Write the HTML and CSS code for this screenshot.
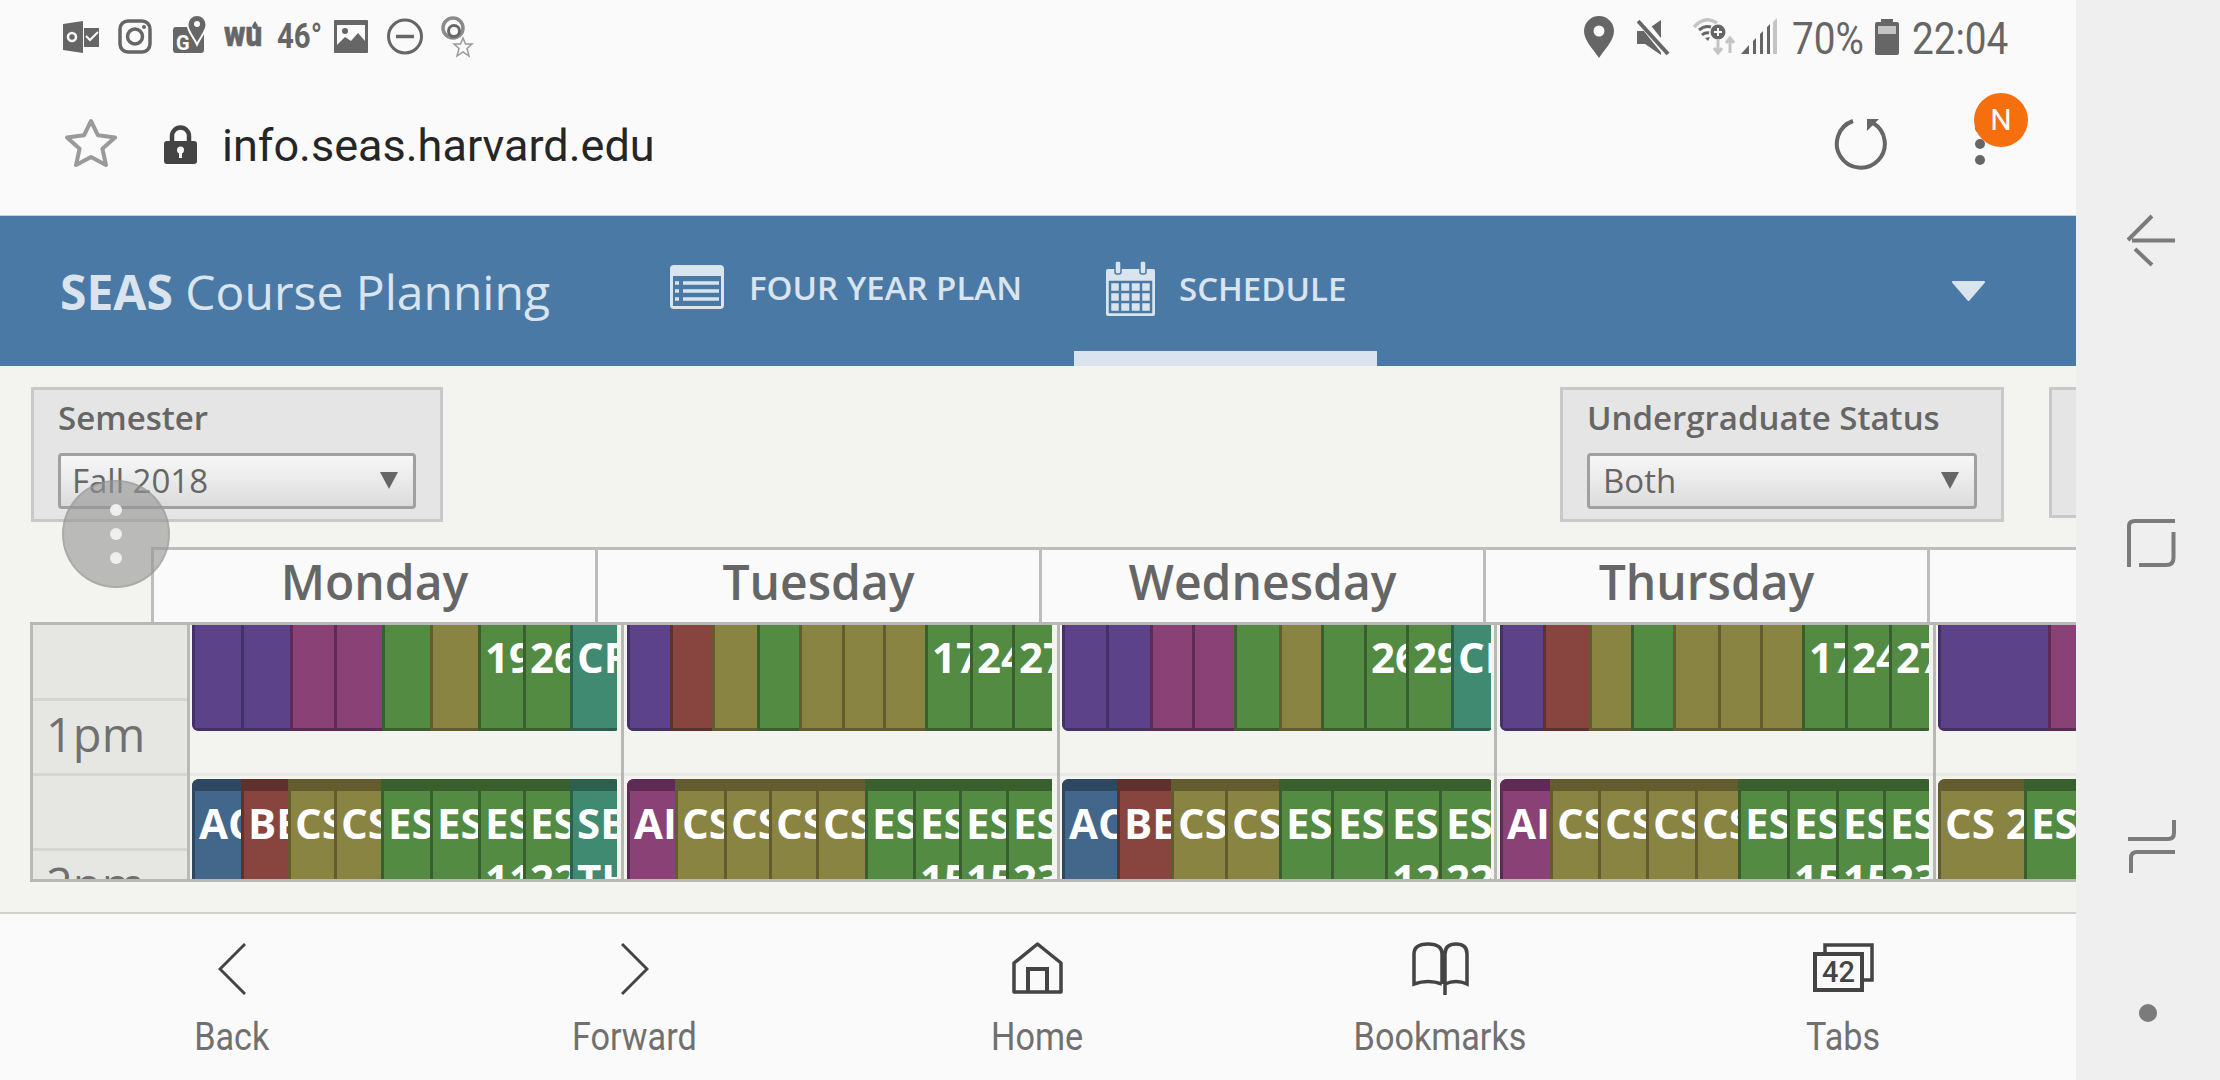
FILE: index.html
```html
<!DOCTYPE html>
<html>
<head>
  <title>SEAS Course Planning</title>
  <meta charset="UTF-8" />
  <link rel="stylesheet" href="styles.css">
</head>
<body>

  <div class="screen">
    <!-- Phone status bar -->
    <div class="statusbar">
      <svg width="55" height="76" viewBox="0 0 55 76"><path d="M0 24 L20 21 V53 L0 50Z"/><circle cx="9" cy="37" r="4" fill="none" stroke="#fafafa" stroke-width="2.5"/><rect x="21" y="28" width="15" height="19"/><path d="M23 36 l4 4 l8 -8" fill="none" stroke="#fafafa" stroke-width="2"/></svg>
      <svg width="55" height="76" viewBox="0 0 55 76"><rect x="2" y="21" width="30" height="31" rx="8" fill="none" stroke="#666" stroke-width="3.5"/><circle cx="17" cy="36.5" r="7.5" fill="none" stroke="#666" stroke-width="3.5"/><circle cx="26" cy="27" r="2"/></svg>
      <svg width="51" height="76" viewBox="0 0 51 76"><rect x="0" y="27" width="31" height="26" rx="3"/><path d="M24 15 a9.500 9.500 0 0 1 9.500 9.500 c0 7 -6 12 -9.500 20 c-3.500 -8 -9.500 -13 -9.500 -20 a9.500 9.500 0 0 1 9.500 -9.500z" stroke="#fafafa" stroke-width="2"/><circle cx="24" cy="24" r="3" fill="#fafafa"/><text x="3" y="50" class="svg-g">G</text></svg>
      <svg width="53" height="76" viewBox="0 0 53 76"><text x="0" y="46" textLength="38" lengthAdjust="spacingAndGlyphs" class="svg-wu">wu</text><path d="M31 21 l2.500 4 a2.800 2.800 0 1 1 -5 0z"/></svg>
      <span class="temp"><span class="temp-text">46°</span></span>
      <svg width="53" height="76" viewBox="0 0 53 76"><rect x="0" y="20" width="34" height="33" rx="1"/><rect x="3" y="25" width="28" height="20" fill="#fafafa"/><circle cx="11" cy="31" r="3"/><path d="M3 45 L11 37 L17 41 L24 33 L31 41 V50 H3Z"/></svg>
      <svg width="54" height="76" viewBox="0 0 54 76"><circle cx="18" cy="36.500" r="16.500" fill="none" stroke="#666" stroke-width="3"/><path d="M9 36.500 H27" stroke="#666" stroke-width="3.500"/></svg>
      <svg width="40" height="76" viewBox="0 0 40 76"><circle cx="12" cy="28" r="10" fill="none" stroke="#8a8a8a" stroke-width="3.500"/><circle cx="13" cy="31" r="5.500" fill="none" stroke="#666" stroke-width="3"/><path d="M22 38 L24.500 44 L31 44 L26 48.500 L28 56 L22 52 L16 56 L18 48.500 L13 44 L19.500 44Z" fill="#fafafa" stroke="#999" stroke-width="1.500"/></svg>

      <div class="status-right">
        <svg width="53" height="76" viewBox="0 0 53 76"><path d="M15 16 a15 15 0 0 1 15 15 c0 10 -10 19 -15 27 c-5 -8 -15 -17 -15 -27 a15 15 0 0 1 15 -15z"/><circle cx="15" cy="31" r="5.500" fill="#fafafa"/></svg>
        <svg width="56" height="76" viewBox="0 0 56 76"><path d="M0 31 H8 L24 20 V55 L8 44 H0Z"/><path d="M3 19 L31 54" stroke="#fafafa" stroke-width="9"/><path d="M1 21 L31 54" stroke="#666" stroke-width="4"/></svg>
        <svg width="48" height="76" viewBox="0 0 48 76"><path d="M1 27 Q12 15 24 23" fill="none" stroke="#c4c4c4" stroke-width="3.500"/><path d="M6 30 Q12 25 18 27 M9 35 Q12 32 16 33" fill="none" stroke="#666" stroke-width="3"/><path d="M12 38 l3 3 l2 -4z"/><circle cx="25" cy="32" r="7.500"/><path d="M25 28 V36 M21 32 H29" stroke="#fafafa" stroke-width="2"/><path d="M25 39 V52 M21 48 L25 53 L29 48" fill="none" stroke="#c4c4c4" stroke-width="3"/><path d="M37 53 V39 M33 43 L37 38 L41 43" fill="none" stroke="#c4c4c4" stroke-width="3"/></svg>
        <svg width="51" height="76" viewBox="0 0 51 76"><path d="M0 54 L8 45 V54Z"/><path d="M12 41 L15 38 V54 H12Z M19 34 L22 31 V54 H19Z M26 27 L29 24 V54 H26Z"/><path d="M32 22 L36 18 V54 H32Z" fill="#c4c4c4"/></svg>
        <span class="clock clock-pct"><span class="clock-text">70%</span></span>
        <svg width="37" height="76" viewBox="0 0 37 76"><path d="M6 19 H18 V22 H22 a2 2 0 0 1 2 2 V53 a2 2 0 0 1 -2 2 H2 a2 2 0 0 1 -2 -2 V24 a2 2 0 0 1 2 -2 H6Z"/><rect x="3" y="26" width="18" height="8" fill="#c4c4c4"/></svg>
        <span class="clock clock-time"><span class="clock-text">22:04</span></span>
      </div>
    </div>

    <!-- Browser address bar -->
    <div class="urlbar">
      <svg width="99" height="140" viewBox="0 0 99 140"><path d="M26 45 L33 59.300 L50 61.500 L37.400 72.700 L41 89 L26 81 L11 89 L14.600 72.700 L2 61.500 L19 59.300Z" fill="none" stroke="#9a9a9a" stroke-width="4" stroke-linejoin="round"/></svg>
      <svg width="58" height="140" viewBox="0 0 58 140"><path d="M8 66 V60 a8.500 8.500 0 0 1 17 0 V66" fill="none" stroke="#444" stroke-width="4.500"/><rect x="0" y="65" width="33" height="23" rx="3" fill="#444"/><circle cx="16.500" cy="74" r="3.500" fill="#fafafa"/><rect x="15" y="75" width="3" height="7" fill="#fafafa"/></svg>
      <span class="url">info.seas.harvard.edu</span>
      <svg class="reload" width="141" height="140" viewBox="0 0 141 140"><path d="M19 45 A24 24 0 1 0 39 47" fill="none" stroke="#666" stroke-width="4"/><path d="M33 43 H45 L33 55Z" fill="#666"/></svg>
      <div class="menu">
        <svg width="10" height="140" viewBox="0 0 10 140"><circle cx="5" cy="52" r="5"/><circle cx="5" cy="68" r="5"/><circle cx="5" cy="84" r="5"/></svg>
        <span class="badge">N</span>
      </div>
    </div>

    <!-- Site header -->
    <div class="site-header">
      <div class="site-title"><b>SEAS</b> Course Planning</div>
      <a class="tab">
        <svg width="54" height="44" viewBox="0 0 54 44"><rect width="54" height="44" rx="4" fill="#d9e4ee"/><rect x="3" y="11" width="48" height="30" fill="#4b79a5"/><path d="M13 18 H49 M13 26 H49 M13 34 H49 M5 18 H9 M5 26 H9 M5 34 H9" stroke="#d9e4ee" stroke-width="3.500"/></svg>
        <span>FOUR YEAR PLAN</span>
      </a>
      <a class="tab tab-active">
        <svg width="51" height="55" viewBox="0 0 51 55"><path d="M3 8 H48 a2 2 0 0 1 2 2 V53 a2 2 0 0 1 -2 2 H3 a2 2 0 0 1 -2 -2 V10 a2 2 0 0 1 2 -2Z" fill="#d9e4ee"/><rect x="10" y="0" width="6" height="13" rx="2" fill="#d9e4ee" stroke="#4b79a5" stroke-width="1.500"/><rect x="35" y="0" width="6" height="13" rx="2" fill="#d9e4ee" stroke="#4b79a5" stroke-width="1.500"/><path d="M5 21 H46 V51 H5Z M5 31 H46 M5 41 H46 M15 21 V51 M25.500 21 V51 M36 21 V51" fill="none" stroke="#4b79a5" stroke-width="2.500"/></svg>
        <span>SCHEDULE</span>
      </a>
      <svg class="site-caret" width="35" height="20" viewBox="0 0 35 20"><path d="M2 1 H33 L17.500 19Z" fill="#d9e4ee" stroke="#d9e4ee" stroke-width="2" stroke-linejoin="round"/></svg>
    </div>

    <!-- Page content -->
    <div class="planner">
      <div class="filters">
        <div class="filter filter-semester">
          <label>Semester</label>
          <div class="select"><span>Fall 2018</span><i class="select-arrow"></i></div>
        </div>
        <div class="filter filter-status">
          <label>Undergraduate Status</label>
          <div class="select"><span>Both</span><i class="select-arrow"></i></div>
        </div>
        <div class="filter filter-more"></div>
      </div>

      <div class="day-heads">
        <div class="day-head">Monday</div>
        <div class="day-head">Tuesday</div>
        <div class="day-head">Wednesday</div>
        <div class="day-head">Thursday</div>
        <div class="day-head"></div>
      </div>

      <div class="calendar">
        <div class="times">
          <div class="time"></div>
          <div class="time">1pm</div>
          <div class="time"></div>
          <div class="time">2pm</div>
        </div>

        <!-- Monday -->
        <div class="day day-1">
          <div class="row row-a">
            <div class="ev purple" style="width:49px"></div>
            <div class="ev purple" style="width:49px"></div>
            <div class="ev magenta" style="width:44px"></div>
            <div class="ev magenta" style="width:48px"></div>
            <div class="ev green" style="width:48px"></div>
            <div class="ev olive" style="width:48px"></div>
            <div class="ev green" style="width:45px">196</div>
            <div class="ev green" style="width:47px">26</div>
            <div class="ev teal" style="width:47px">CFD</div>
          </div>
          <div class="row row-b">
            <div class="ev blue" style="width:49px">AC 2</div>
            <div class="ev red" style="width:47px">BE 1</div>
            <div class="ev olive" style="width:46px">CS 1</div>
            <div class="ev olive" style="width:47px">CS 2</div>
            <div class="ev green" style="width:49px">ES 1</div>
            <div class="ev green" style="width:48px">ES 2</div>
            <div class="ev green" style="width:45px">ES 3<br>11</div>
            <div class="ev green" style="width:47px">ES 4<br>22</div>
            <div class="ev teal" style="width:47px">SEC<br>TH</div>
          </div>
        </div>

        <!-- Tuesday -->
        <div class="day day-2">
          <div class="row row-a">
            <div class="ev purple" style="width:43px"></div>
            <div class="ev red" style="width:42px"></div>
            <div class="ev olive" style="width:45px"></div>
            <div class="ev green" style="width:42px"></div>
            <div class="ev olive" style="width:43px"></div>
            <div class="ev olive" style="width:41px"></div>
            <div class="ev olive" style="width:42px"></div>
            <div class="ev green" style="width:45px">17</div>
            <div class="ev green" style="width:42px">24</div>
            <div class="ev green" style="width:40px">27</div>
          </div>
          <div class="row row-b">
            <div class="ev magenta" style="width:48px">AI 5</div>
            <div class="ev olive" style="width:49px">CS 1</div>
            <div class="ev olive" style="width:45px">CS 2</div>
            <div class="ev olive" style="width:47px">CS 3</div>
            <div class="ev olive" style="width:49px">CS 4</div>
            <div class="ev green" style="width:48px">ES 1</div>
            <div class="ev green" style="width:46px">ES 2<br>15</div>
            <div class="ev green" style="width:47px">ES 3<br>15</div>
            <div class="ev green" style="width:46px">ES 4<br>23</div>
          </div>
        </div>

        <!-- Wednesday -->
        <div class="day day-3">
          <div class="row row-a">
            <div class="ev purple" style="width:44px"></div>
            <div class="ev purple" style="width:44px"></div>
            <div class="ev magenta" style="width:42px"></div>
            <div class="ev magenta" style="width:42px"></div>
            <div class="ev green" style="width:45px"></div>
            <div class="ev olive" style="width:42px"></div>
            <div class="ev green" style="width:43px"></div>
            <div class="ev green" style="width:42px">26</div>
            <div class="ev green" style="width:45px">29</div>
            <div class="ev teal" style="width:40px">CFD</div>
          </div>
          <div class="row row-b">
            <div class="ev blue" style="width:55px">AC 2</div>
            <div class="ev red" style="width:54px">BE 1</div>
            <div class="ev olive" style="width:54px">CS 1</div>
            <div class="ev olive" style="width:54px">CS 2</div>
            <div class="ev green" style="width:52px">ES 1</div>
            <div class="ev green" style="width:54px">ES 2</div>
            <div class="ev green" style="width:54px">ES 3<br>12</div>
            <div class="ev green" style="width:52px">ES 4<br>22</div>
          </div>
        </div>

        <!-- Thursday -->
        <div class="day day-4">
          <div class="row row-a">
            <div class="ev purple" style="width:43px"></div>
            <div class="ev red" style="width:46px"></div>
            <div class="ev olive" style="width:42px"></div>
            <div class="ev green" style="width:42px"></div>
            <div class="ev olive" style="width:45px"></div>
            <div class="ev olive" style="width:42px"></div>
            <div class="ev olive" style="width:42px"></div>
            <div class="ev green" style="width:43px">17</div>
            <div class="ev green" style="width:44px">24</div>
            <div class="ev green" style="width:40px">27</div>
          </div>
          <div class="row row-b">
            <div class="ev magenta" style="width:50px">AI 5</div>
            <div class="ev olive" style="width:48px">CS 1</div>
            <div class="ev olive" style="width:48px">CS 2</div>
            <div class="ev olive" style="width:49px">CS 3</div>
            <div class="ev olive" style="width:43px">CS 4</div>
            <div class="ev green" style="width:49px">ES 1</div>
            <div class="ev green" style="width:49px">ES 2<br>15</div>
            <div class="ev green" style="width:47px">ES 3<br>15</div>
            <div class="ev green" style="width:46px">ES 4<br>23</div>
          </div>
        </div>

        <!-- Friday -->
        <div class="day day-5">
          <div class="row row-a">
            <div class="ev purple" style="width:110px"></div>
            <div class="ev magenta" style="width:100px"></div>
          </div>
          <div class="row row-b">
            <div class="ev olive" style="width:86px">CS 2</div>
            <div class="ev green" style="width:100px">ES 1</div>
          </div>
        </div>
      </div>

      <!-- Floating menu button -->
      <div class="fab"><i></i><i></i><i></i></div>
    </div>

    <!-- Browser bottom bar -->
    <div class="bottombar">
      <div class="bar-item">
        <svg width="28" height="54" viewBox="0 0 28 54"><path d="M27 2 L2 27 L27 52" fill="none" stroke="#444" stroke-width="3"/></svg>
        <span class="bar-label"><span>Back</span></span>
      </div>
      <div class="bar-item">
        <svg width="28" height="54" viewBox="0 0 28 54"><path d="M1 2 L26 27 L1 52" fill="none" stroke="#444" stroke-width="3"/></svg>
        <span class="bar-label"><span>Forward</span></span>
      </div>
      <div class="bar-item">
        <svg width="51" height="54" viewBox="0 0 51 54"><path d="M2 50 V21 L25.500 2 L49 21 V50Z" fill="none" stroke="#444" stroke-width="3.500" stroke-linejoin="round"/><path d="M16 50 V27 H35 V50" fill="none" stroke="#444" stroke-width="4"/></svg>
        <span class="bar-label"><span>Home</span></span>
      </div>
      <div class="bar-item">
        <svg width="57" height="54" viewBox="0 0 57 54"><path d="M33 53 V12 Q33 2 44 2 Q55 2 55 12 V42 Q44 37 33 42 M30 42 Q16 37 2 42 V12 Q2 2 16 2 Q30 2 30 12 V42" fill="none" stroke="#444" stroke-width="3.500"/></svg>
        <span class="bar-label"><span>Bookmarks</span></span>
      </div>
      <div class="bar-item">
        <svg width="61" height="54" viewBox="0 0 61 54"><path d="M12 10 V3 H59 V38 H51" fill="none" stroke="#444" stroke-width="3.500"/><rect x="2" y="12" width="47" height="36" fill="#fafafa" stroke="#444" stroke-width="4"/><text x="9" y="40" class="svg-tabs">42</text></svg>
        <span class="bar-label"><span>Tabs</span></span>
      </div>
    </div>
  </div>

  <!-- Android soft keys -->
  <div class="softkeys">
    <svg width="144" height="1080" viewBox="0 0 144 1080">
      <path d="M76 216 L52 240 M56 240.500 H99 M59 249 L76 265" fill="none" stroke="#7b7b7b" stroke-width="4"/>
      <path d="M53 567 V526 Q53 521 59 521 H99 M97.500 532 V558 Q97.500 565 90 565 H63" fill="none" stroke="#7b7b7b" stroke-width="4"/>
      <path d="M52 839 H92 Q98 839 98 833 V820 M99 852 H61 Q55 852 55 858 V873" fill="none" stroke="#7b7b7b" stroke-width="4"/>
      <circle cx="72" cy="1013" r="9" fill="#7b7b7b"/>
    </svg>
  </div>

</body>
</html>
```

FILE: styles.css
```css
/* Page frame */
* {
  box-sizing: border-box;
}

html, body {
  margin: 0;
  height: 1080px;
  overflow: hidden;
}

body {
  display: flex;
  width: 2220px;
  font-family: "Open Sans", sans-serif;
  background: #fafafa;
}

.screen {
  width: 2076px;
  flex-shrink: 0;
}

.softkeys {
  width: 144px;
  background: #efefef;
}

svg {
  display: block;
  flex-shrink: 0;
  fill: #666;
}

/* Status bar */
.statusbar {
  display: flex;
  height: 76px;
  padding-left: 63px;
}

.status-right {
  display: flex;
  margin-left: auto;
  padding-right: 67px;
}

.temp {
  width: 57px;
}

.temp-text {
  display: inline-block;
  font: 700 35px/74px Roboto, sans-serif;
  color: #666;
  transform: scaleX(0.84);
  transform-origin: left;
}

.clock {
  font: 400 45px/78px Roboto, sans-serif;
  color: #666;
}

.clock-pct {
  width: 83px;
}

.clock-time {
  width: 97px;
}

.clock-text {
  display: inline-block;
  white-space: nowrap;
  transform: scaleX(0.86);
  transform-origin: left;
}

.svg-g {
  font: 700 20px Roboto, sans-serif;
  fill: #fafafa;
}

.svg-wu {
  font: 900 35px Roboto, sans-serif;
  fill: #666;
  stroke: #666;
  stroke-width: 0.6px;
}

/* Address bar */
.urlbar {
  display: flex;
  align-items: center;
  height: 140px;
  padding-left: 65px;
  padding-right: 91px;
  border-bottom: 1px solid #d0d0d0;
}

.url {
  font: 400 45px Roboto, sans-serif;
  color: #262626;
}

.reload {
  margin-left: auto;
}

.menu {
  position: relative;
}

.badge {
  position: absolute;
  left: -1px;
  top: 17px;
  width: 54px;
  height: 54px;
  border-radius: 50%;
  background: #f66f0e;
  color: #fff;
  font: 400 30px/54px Roboto, sans-serif;
  text-align: center;
}

/* Site header */
.site-header {
  display: flex;
  align-items: center;
  height: 150px;
  background: #4b79a5;
  color: #d9e4ee;
}

.site-title {
  width: 639px;
  padding-left: 60px;
  font-size: 48px;
  white-space: nowrap;
}

.site-title b {
  font-weight: 700;
}

.tab {
  display: flex;
  align-items: center;
  gap: 25px;
  height: 150px;
  padding: 0 31px 8px;
  margin-right: 21px;
  font-size: 33px;
  font-weight: 600;
}

.tab-active {
  gap: 23px;
  border-bottom: 15px solid #d9e4ee;
  padding-bottom: 0;
  margin-right: 0;
  padding-top: 10px;
}

.site-caret {
  margin-left: auto;
  margin-right: 90px;
}

/* Filters */
.planner {
  position: relative;
  height: 546px;
  background: #f3f3ef;
  overflow: hidden;
  padding-top: 21px;
}

.filters {
  display: flex;
  align-items: flex-start;
  padding-left: 31px;
}

.filter {
  flex-shrink: 0;
  height: 135px;
  padding: 7px 24px 0;
  background: #e5e5e5;
  border: 3px solid #c9c9c9;
  color: #666;
}

.filter label {
  display: block;
  font-size: 33px;
  font-weight: 600;
  line-height: 42px;
}

.filter-semester {
  width: 412px;
}

.filter-status {
  width: 444px;
  margin-left: 1117px;
}

.filter-more {
  width: 200px;
  height: 131px;
  margin-left: 45px;
}

.select {
  display: flex;
  align-items: center;
  justify-content: space-between;
  height: 56px;
  margin-top: 14px;
  padding: 0 15px 2px 13px;
  border: 3px solid #a0a0a0;
  border-radius: 4px;
  background: linear-gradient(#f7f7f7, #dcdcdc);
  font-size: 33px;
}

.filter-semester .select {
  padding-left: 11px;
}

.select-arrow {
  width: 0;
  height: 0;
  border-left: 9px solid transparent;
  border-right: 9px solid transparent;
  border-top: 17px solid #666;
}

/* Day names */
.day-heads {
  display: flex;
  margin-top: 25px;
  margin-left: 151px;
}

.day-head {
  width: 444px;
  flex-shrink: 0;
  height: 75px;
  background: #fafafa;
  border-top: 3px solid #bdbdbd;
  border-left: 3px solid #bdbdbd;
  color: #666;
  font-size: 48px;
  font-weight: 600;
  line-height: 64px;
  text-align: center;
}

/* Calendar grid */
.calendar {
  display: flex;
  width: 2200px;
  height: 260px;
  margin-left: 30px;
  border: solid #b8b9b5;
  border-width: 3px 0 3px 3px;
}

.times {
  width: 157px;
  flex-shrink: 0;
  background: #e6e7e3;
  border-right: 3px solid #b8b9b5;
  overflow: hidden;
}

.time {
  height: 75px;
  padding-left: 13px;
  border-bottom: 3px solid #d5d6d2;
  color: #707070;
  font-size: 47px;
  line-height: 66px;
}

.time:first-child {
  height: 76px;
}

.day {
  flex-shrink: 0;
  height: 254px;
  padding-left: 2px;
  border-right: 3px solid #b8b9b5;
  overflow: hidden;
  background: linear-gradient(#f3f3ef 148px, #e8e9e5 148px, #e8e9e5 151px, #f3f3ef 151px);
}

.day-1 { width: 434px; }
.day-2 { width: 436px; padding-left: 3px; }
.day-3 { width: 437px; }
.day-4 { width: 439px; padding-left: 3px; }
.day-5 { width: 400px; border-right: 0; }

.row {
  display: flex;
  overflow: hidden;
  color: #fff;
  font-size: 42px;
  font-weight: 700;
  line-height: 56px;
}

.row-a {
  height: 106px;
  border-radius: 0 0 7px 7px;
}

.row-b {
  height: 140px;
  margin-top: 48px;
  border-radius: 7px 7px 0 0;
}

.ev {
  flex-shrink: 0;
  padding-left: 4px;
  border-style: solid;
  border-width: 0 0 0 3px;
  overflow: hidden;
  white-space: nowrap;
}

.row-a .ev {
  padding-top: 4px;
  border-bottom-width: 3px;
}

.row-b .ev {
  padding-top: 4px;
  border-top-width: 12px;
}

.purple { background: #5c4289; border-color: #44306a; }
.magenta { background: #8a4176; border-color: #5f2a54; }
.green { background: #538b42; border-color: #3a5f2e; }
.olive { background: #8a8442; border-color: #625c2e; }
.teal { background: #3f8a70; border-color: #2b5f4e; }
.blue { background: #43678a; border-color: #2d4860; }
.red { background: #884540; border-color: #5f302c; }

/* Floating button */
.fab {
  position: absolute;
  left: 62px;
  top: 114px;
  display: flex;
  flex-direction: column;
  align-items: center;
  justify-content: center;
  gap: 12px;
  width: 108px;
  height: 108px;
  border-radius: 50%;
  background: rgba(150, 150, 150, 0.62);
  border: 2px solid rgba(150, 150, 150, 0.4);
}

.fab i {
  width: 12px;
  height: 12px;
  border-radius: 50%;
  background: #efefef;
}

/* Bottom bar */
.bottombar {
  display: flex;
  height: 168px;
  padding-left: 30px;
  border-top: 2px solid #d0d0cc;
}

.bar-item {
  display: flex;
  flex-direction: column;
  align-items: center;
  width: 403px;
  padding-top: 28px;
}

.bar-label {
  margin-top: 17px;
  color: #707070;
  font: 400 38px/48px Roboto, sans-serif;
}

.bar-label span {
  display: inline-block;
  transform: scaleX(0.9);
}

.svg-tabs {
  font: 500 29px Roboto, sans-serif;
  fill: #444;
}
```
